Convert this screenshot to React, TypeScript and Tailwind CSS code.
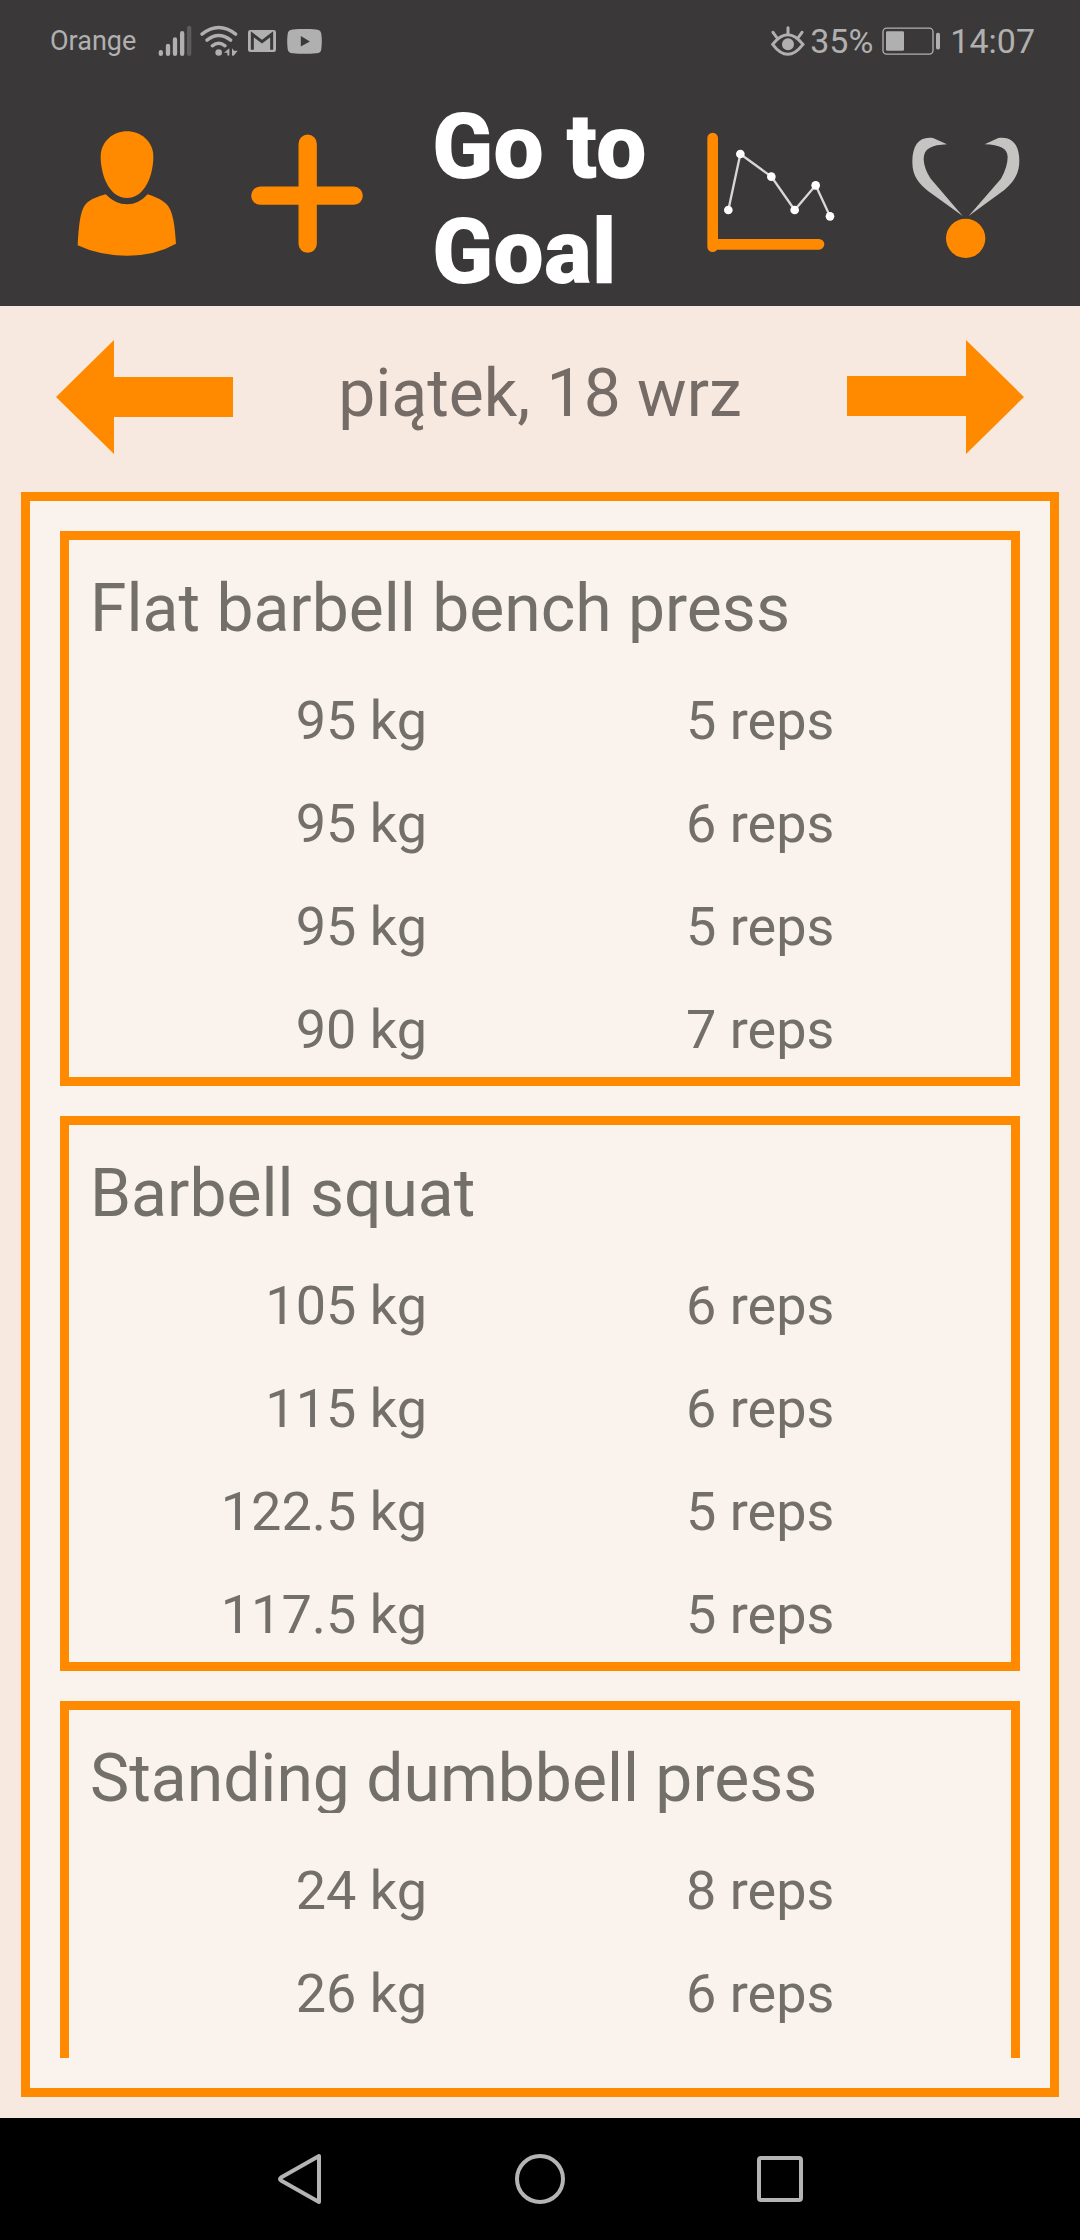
import React from "react";

type WorkoutSet = { weight: string; reps: number };
type Exercise = { name: string; sets: WorkoutSet[] };

const exercises: Exercise[] = [
  {
    name: "Flat barbell bench press",
    sets: [
      { weight: "95", reps: 5 },
      { weight: "95", reps: 6 },
      { weight: "95", reps: 5 },
      { weight: "90", reps: 7 },
    ],
  },
  {
    name: "Barbell squat",
    sets: [
      { weight: "105", reps: 6 },
      { weight: "115", reps: 6 },
      { weight: "122.5", reps: 5 },
      { weight: "117.5", reps: 5 },
    ],
  },
  {
    name: "Standing dumbbell press",
    sets: [
      { weight: "24", reps: 8 },
      { weight: "26", reps: 6 },
    ],
  },
];

function StatusBar() {
  return (
    <div className="mb-3 flex h-[82px] items-center justify-between pr-[45px] pl-[50px] text-[#b1b0b0]">
      <div className="flex items-center">
        <span className="pt-[1px] text-[27px]">Orange</span>
        <svg className="ml-[22px] h-8 w-[34px]" viewBox="477 73 102 95" fill="none" stroke="currentColor" strokeWidth="13" strokeLinecap="round" aria-hidden="true">
          <path d="M485.500 154v5M507 135v24M528 116v43M549.500 97v62" />
          <path d="M570.500 81v78" opacity=".3" />
        </svg>
        <svg className="ml-2 h-8 w-[38px]" viewBox="603 73 114 95" fill="none" stroke="currentColor" strokeWidth="10" strokeLinecap="round" aria-hidden="true">
          <path d="M609 100Q659 60 710 100M624 118Q659 90 695 118M640 135Q659 120 678 135" />
          <circle cx="659" cy="155" r="10" fill="currentColor" stroke="none" />
          <path d="M691 142v22h-6v-8h-10zM699 164v-22l6 8h11l-12 15z" fill="currentColor" stroke="none" />
        </svg>
        <svg className="ml-[10px] h-[22px] w-7" viewBox="747 90 84 66" aria-hidden="true">
          <rect x="747" y="90" width="84" height="66" rx="7" fill="currentColor" />
          <path d="M760 149V103l29 22 29-22v46" fill="none" stroke="#3a3838" strokeWidth="9" />
        </svg>
        <svg className="ml-[11px] h-[25px] w-[35px]" viewBox="863 86 104 74" aria-hidden="true">
          <path d="M880 87Q915 84 950 87Q964 88 965 101Q968 123 965 145Q964 158 950 158Q915 161 880 158Q866 157 865 145Q862 123 865 101Q866 88 880 87Z" fill="currentColor" />
          <path d="M904 107v31l27-15z" fill="#3a3838" />
        </svg>
      </div>
      <div className="flex items-center text-[34px]">
        <svg className="h-[30px] w-[34px]" viewBox="95 75 102 90" fill="none" stroke="currentColor" strokeWidth="9" strokeLinecap="round" aria-hidden="true">
          <path d="M100 130Q145 72 191 130Q145 190 100 130ZM146 80v18M101 94l10 14M188 94l-10 14" />
          <circle cx="146" cy="130" r="18" fill="currentColor" stroke="none" />
        </svg>
        <span className="ml-[5px]">35%</span>
        <svg className="ml-[9px] h-7 w-[59px]" viewBox="428 80 177 83" aria-hidden="true">
          <rect x="431" y="83" width="150" height="78" rx="11" fill="none" stroke="currentColor" strokeWidth="4" />
          <rect x="440" y="92" width="54" height="59" rx="4" fill="currentColor" />
          <rect x="590" y="97" width="12" height="50" rx="5" fill="currentColor" />
        </svg>
        <span className="ml-[9px]">14:07</span>
      </div>
    </div>
  );
}

function Toolbar() {
  return (
    <div className="flex items-center pr-6 pb-[1px] pl-[37px]">
      <button type="button" aria-label="Profile" className="shrink-0">
        <svg className="h-[211px] w-[180px]" viewBox="-9 12 540 633" fill="#ff8a00">
          <path d="M261 124C302 124 340 154 340 200C340 255 314 324 261 324C208 324 182 255 182 200C182 154 220 124 261 124Z" />
          <path d="M197 313Q226 343 261 343Q296 343 323 313Q362 325 380 343C400 365 404 405 408 461Q345 497 261 497Q178 497 113 466C116 405 121 365 135 345Q150 325 197 313Z" />
        </svg>
      </button>
      <button type="button" aria-label="Add" className="shrink-0">
        <svg className="h-[211px] w-[180px]" viewBox="531 12 540 633" fill="none" stroke="#ff8a00" strokeWidth="55" strokeLinecap="round">
          <path d="M803 161v300M661 317h280" />
        </svg>
      </button>
      <h1 className="ml-[35px] flex-1 text-[90px] leading-[105px] font-black text-white">Go to Goal</h1>
      <button type="button" aria-label="Statistics" className="shrink-0">
        <svg className="h-[211px] w-[180px]" viewBox="3 12 540 633" fill="none">
          <path d="M98 144v326M98 463h319" stroke="#ff8a00" strokeWidth="32" strokeLinecap="round" />
          <path d="M145 360L181 192L274 260L344 360L407 286L450 379" stroke="#d8d8d8" strokeWidth="7" />
          <g fill="#fff">
            <circle cx="145" cy="360" r="13" />
            <circle cx="181" cy="192" r="13" />
            <circle cx="274" cy="260" r="13" />
            <circle cx="344" cy="360" r="13" />
            <circle cx="407" cy="286" r="13" />
            <circle cx="450" cy="379" r="13" />
          </g>
        </svg>
      </button>
      <button type="button" aria-label="Records" className="ml-[15px] shrink-0">
        <svg className="h-[211px] w-[180px]" viewBox="588 12 540 633">
          <g fill="#c6c4c3">
            <path d="M801 163L759 144C720 138 697 162 697 216C697 260 718 282 744 303L848 378L751 265Q732 235 731 208C731 175 755 165 801 163Z" />
            <path d="M914 163L955 144C994 138 1018 162 1018 212C1018 250 1002 275 973 300L866 378L963 266Q983 230 983 200C981 174 960 165 914 163Z" />
          </g>
          <circle cx="857" cy="445" r="59" fill="#ff8a00" />
        </svg>
      </button>
    </div>
  );
}

function DayPicker() {
  return (
    <div className="flex h-[186px] shrink-0 items-center justify-between px-14 pb-1">
      <button type="button" aria-label="Previous day">
        <svg className="h-[114px] w-[178px]" viewBox="0 0 178 114" fill="#ff8a00">
          <path d="M0 57L58 0v37h119v40H58v37z" />
        </svg>
      </button>
      <p className="pb-2 text-[66px] leading-[77px] text-[#766c67]">piątek, 18 wrz</p>
      <button type="button" aria-label="Next day">
        <svg className="h-[114px] w-[178px]" viewBox="0 0 178 114" fill="#ff8a00">
          <path d="M178 57L120 0v36H1v40h119v38z" />
        </svg>
      </button>
    </div>
  );
}

function ExerciseCard({ exercise }: { exercise: Exercise }) {
  return (
    <section className="min-h-[555px] shrink-0 border-[9px] border-[#ff8a00]">
      <h2 className="mb-[22px] h-[103px] overflow-hidden pt-[30px] pl-[21px] text-[66px] leading-[77px] whitespace-nowrap">
        {exercise.name}
      </h2>
      <table className="w-full table-fixed text-[54px] leading-[63px]" aria-label={exercise.name}>
        <tbody>
          {exercise.sets.map((set, i) => (
            <tr key={i}>
              <td className="w-[38%] pt-6 pb-4 text-right">{set.weight} kg</td>
              <td className="pt-6 pb-4 pl-[259px]">{set.reps} reps</td>
            </tr>
          ))}
        </tbody>
      </table>
    </section>
  );
}

function NavigationBar() {
  return (
    <nav className="flex h-[122px] shrink-0 items-center justify-center gap-[180px] bg-black text-[#b4b4b4]">
      <button type="button" aria-label="Back">
        <svg className="h-[60px] w-[60px]" viewBox="0 0 60 60" fill="none" stroke="currentColor" strokeWidth="4" strokeLinejoin="round">
          <path d="M49 7v46L11 31.500q-2-1.500 0-3z" />
        </svg>
      </button>
      <button type="button" aria-label="Home">
        <svg className="h-[60px] w-[60px]" viewBox="0 0 60 60" fill="none" stroke="currentColor" strokeWidth="4">
          <circle cx="30" cy="30" r="23" />
        </svg>
      </button>
      <button type="button" aria-label="Recent apps">
        <svg className="h-[60px] w-[60px]" viewBox="0 0 60 60" fill="none" stroke="currentColor" strokeWidth="4">
          <rect x="9" y="9" width="42" height="42" rx="2" />
        </svg>
      </button>
    </nav>
  );
}

export default function App() {
  return (
    <div className="flex h-screen flex-col bg-[#f8e9e0] font-['Roboto',sans-serif]">
      <header className="shrink-0 bg-[#3a3838]">
        <StatusBar />
        <Toolbar />
      </header>
      <DayPicker />
      <main className="mx-[21px] mb-[21px] flex min-h-0 flex-1 flex-col border-[9px] border-[#ff8a00] bg-[#faf2ec] p-[30px] text-[#736f6b]">
        <div className="flex min-h-0 flex-1 flex-col gap-[30px] overflow-y-auto [scrollbar-width:none]">
          {exercises.map((exercise) => (
            <ExerciseCard key={exercise.name} exercise={exercise} />
          ))}
        </div>
      </main>
      <NavigationBar />
    </div>
  );
}
